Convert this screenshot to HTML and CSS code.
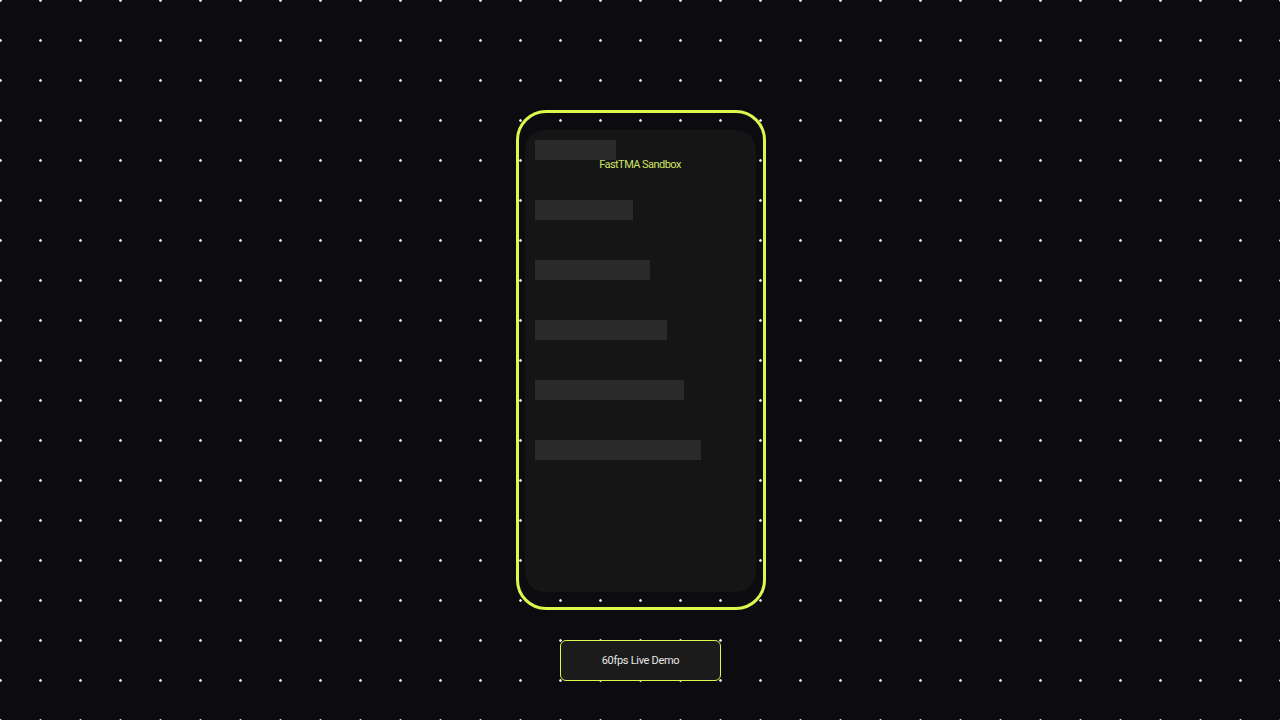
FILE: index.html
```html
<!DOCTYPE html>
<html>
<head>
<meta charset="utf-8">
<link rel="stylesheet" href="styles.css">
</head>
<body>
<main class="stage">
  <div class="phone">
    <div class="screen">
      <div class="title">FastTMA Sandbox</div>
      <div class="bar" style="width:81px"></div>
      <div class="bar" style="width:98px"></div>
      <div class="bar" style="width:115px"></div>
      <div class="bar" style="width:132px"></div>
      <div class="bar" style="width:149px"></div>
      <div class="bar" style="width:166px"></div>
    </div>
  </div>
  <button class="demo">60fps Live Demo</button>
</main>
</body>
</html>
```
FILE: styles.css
```css
html, body {
  margin: 0;
  padding: 0;
  height: 100%;
}
body {
  background-color: #0b0b10;
  background-image: radial-gradient(circle at 20.5px 20.5px, #ffffff 0.9px, rgba(255,255,255,0) 1.6px);
  background-size: 40px 40px;
  background-position: -20px -20px;
  font-family: Roboto, "Liberation Sans", sans-serif;
  overflow: hidden;
}
.stage {
  display: flex;
  flex-direction: column;
  align-items: center;
  padding-top: 110px;
  gap: 30px;
}
.phone {
  box-sizing: border-box;
  width: 250px;
  height: 500px;
  border: 3px solid #dcf84c;
  border-radius: 30px;
  padding: 17px 7px 15px 6px;
  margin-left: 1px;
}
.screen {
  position: relative;
  box-sizing: border-box;
  height: 100%;
  background: #151515;
  border-radius: 20px;
  padding: 10px 10px;
  display: flex;
  flex-direction: column;
  gap: 40px;
}
.title {
  position: absolute;
  left: 0;
  right: 0;
  top: 28px;
  text-align: center;
  font-size: 11px;
  line-height: 13px;
  color: #cfe463;
  letter-spacing: -0.55px;
}
.bar {
  height: 20px;
  background: #2a2a2a;
  flex: none;
}
.demo {
  box-sizing: border-box;
  width: 161px;
  height: 41px;
  background: #1b1b1b;
  border: 1px solid #dcf84c;
  border-radius: 6px;
  color: #e8e8e8;
  font-family: Roboto, "Liberation Sans", sans-serif;
  font-size: 11px;
  letter-spacing: -0.3px;
  padding: 0;
  margin-left: 1px;
}
```
